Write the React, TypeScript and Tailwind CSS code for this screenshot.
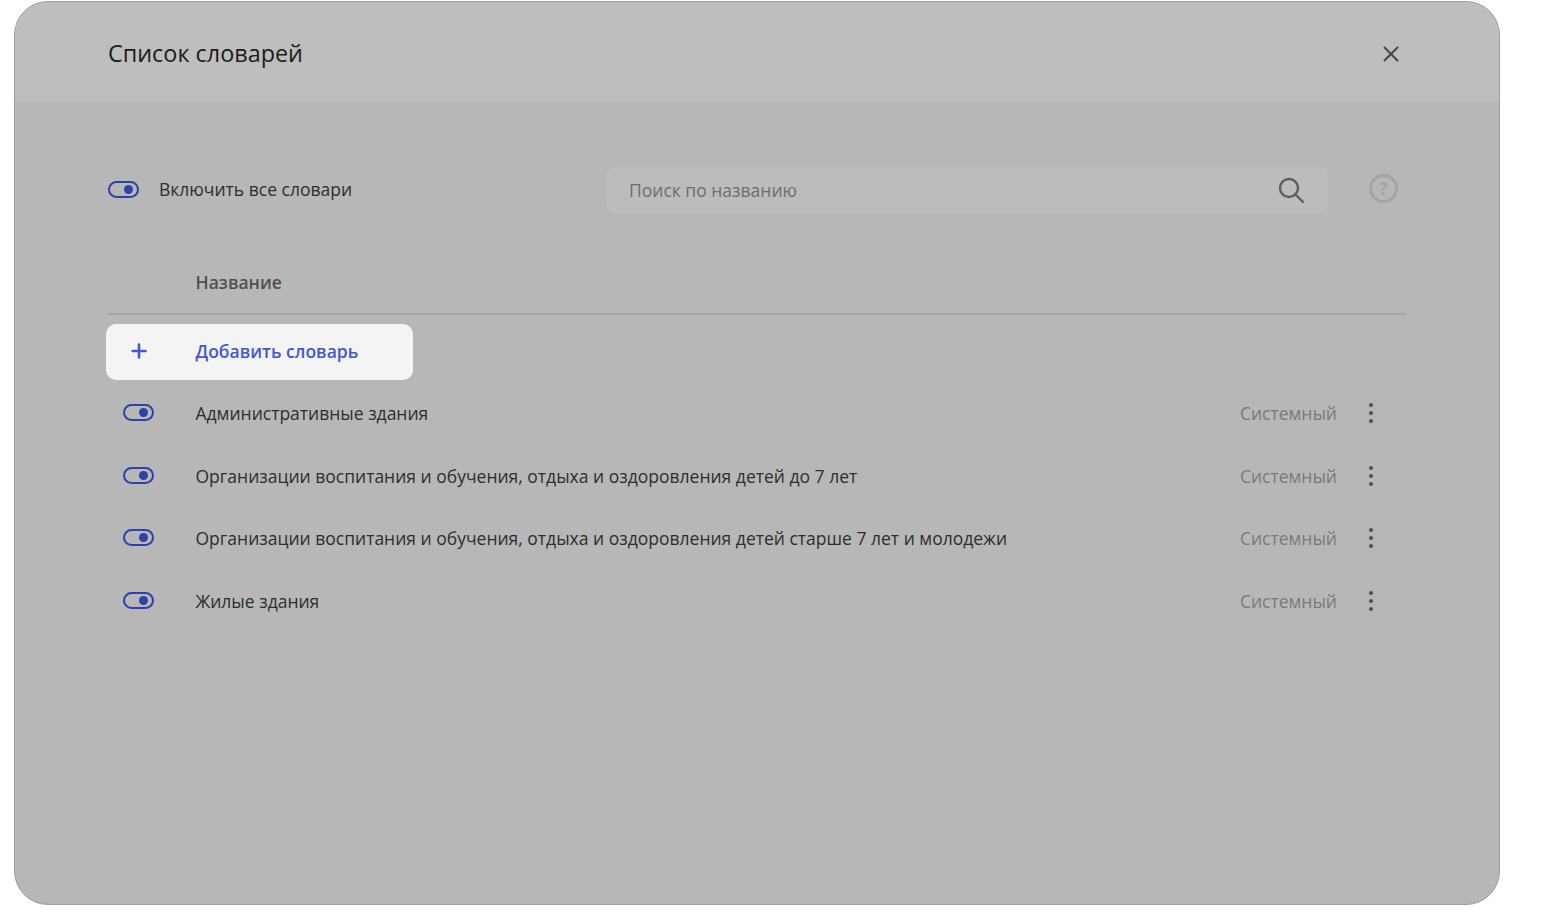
import React from "react";
import { Plus, X } from "lucide-react";

const FONT = "font-['Open_Sans','Noto_Sans',sans-serif]";

const dictionaries = [
  "Административные здания",
  "Организации воспитания и обучения, отдыха и оздоровления детей до 7 лет",
  "Организации воспитания и обучения, отдыха и оздоровления детей старше 7 лет и молодежи",
  "Жилые здания",
];

function Toggle() {
  return (
    <span className="flex items-center justify-end w-[31px] h-[17px] rounded-full border-2 border-[#2f40a8] pr-[4px] shrink-0">
      <span className="w-[9px] h-[9px] rounded-full bg-[#2f40a8]" />
    </span>
  );
}

function Dots() {
  return (
    <svg width="6" height="20" viewBox="0 0 6 20" className="shrink-0">
      <circle cx="3" cy="2" r="2" fill="#505050" />
      <circle cx="3" cy="10" r="2" fill="#505050" />
      <circle cx="3" cy="18" r="2" fill="#505050" />
    </svg>
  );
}

function Row({ name }: { name: string }) {
  return (
    <div className="flex items-center h-[62.6px]">
      <div className="w-[87.5px] pl-[15px] pb-px shrink-0">
        <Toggle />
      </div>
      <span className="flex-1 text-[17.5px] text-[#2e2e2e]">{name}</span>
      <span className="text-[17.5px] text-[#7a7a7a] mr-[31px]">Системный</span>
      <span className="mr-[32px] flex">
        <Dots />
      </span>
    </div>
  );
}

export default function App() {
  return (
    <div className={`${FONT} min-h-[913px] bg-white pt-px pl-[14px]`}>
      <div className="w-[1486px] h-[904px] rounded-[34px] border border-[#9c9c9c] bg-[#b7b7b7] overflow-hidden">
        <header className="flex items-center justify-between h-[100px] bg-[#bebebe] pl-[93px] pr-[95px] pt-[2px]">
          <h1 className="text-[23.4px] font-normal text-[#1c1c1c] mt-[2px]">Список словарей</h1>
          <X size={26} strokeWidth={1.9} className="text-[#484848] mt-[2px]" />
        </header>

        <div className="px-[93px]">
          <div className="flex items-center pt-[65px]">
            <span className="mb-px">
              <Toggle />
            </span>
            <span className="ml-[20px] mb-[2px] w-[447px] text-[17.5px] text-[#2e2e2e]">Включить все словари</span>
            <div className="flex items-center justify-between w-[723px] h-[46px] rounded-[10px] bg-[#bcbcbc] pl-[23px] pr-[24px]">
              <span className="text-[17.5px] text-[#6e6e6e]">Поиск по названию</span>
              <svg width="28" height="28" viewBox="0 0 28 28" fill="none" stroke="#5e5e5e" strokeWidth="2.4" strokeLinecap="round">
                <circle cx="12" cy="12" r="9" />
                <path d="M18.5 18.5L26 26" />
              </svg>
            </div>
            <span className="ml-[40px] mb-[3px] flex items-center justify-center w-[29px] h-[29px] rounded-full border-[3px] border-[#a4a4a4] text-[17px] font-bold text-[#a4a4a4] leading-none">
              ?
            </span>
          </div>

          <div className="h-[58px] mt-[44px] pl-[87.5px] border-b-2 border-[#a6a6a6] text-[17.5px] font-semibold text-[#505050] pt-[12px]">
            Название
          </div>

          <button
            type="button"
            className="flex items-center w-[307px] h-[56px] mt-[9px] -ml-[2px] pb-[2px] rounded-[10px] bg-[#f4f4f4] text-[17.5px] font-semibold text-[#4257d8]"
          >
            <span className="w-[89.5px] pl-[22px]">
              <Plus size={22} strokeWidth={2.8} />
            </span>
            Добавить словарь
          </button>

          <div className="mt-[2px]">
            {dictionaries.map((name) => (
              <Row key={name} name={name} />
            ))}
          </div>
        </div>
      </div>
    </div>
  );
}
